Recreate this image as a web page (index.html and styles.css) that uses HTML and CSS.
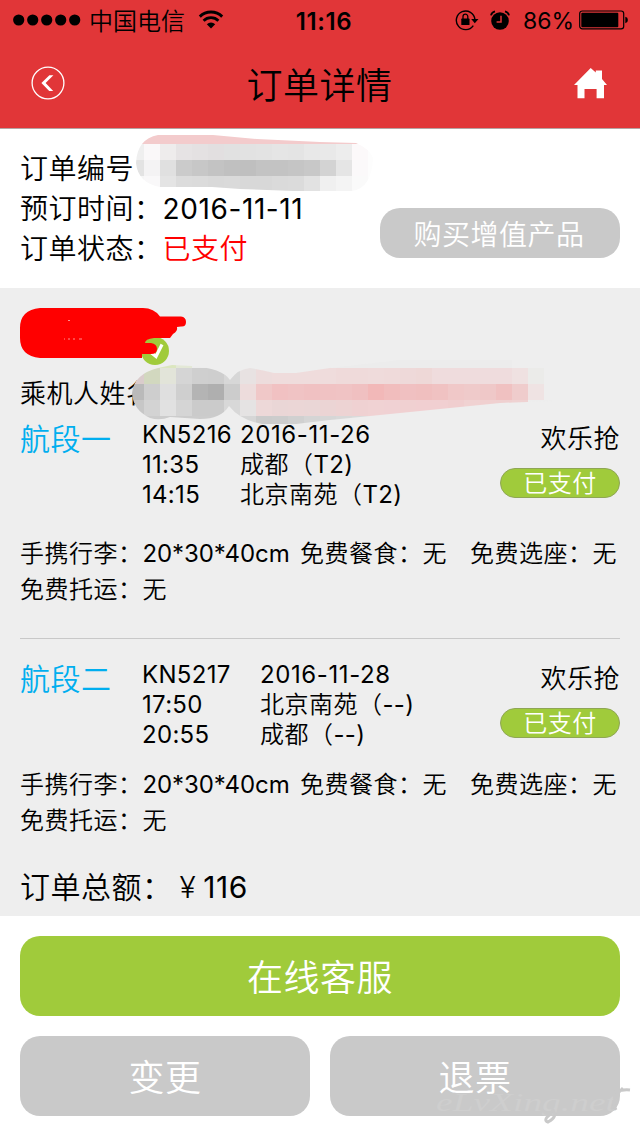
FILE: index.html
```html
<!DOCTYPE html>
<html lang="zh-CN">
<head>
  <meta charset="UTF-8">
  <meta name="viewport" content="width=device-width, initial-scale=1.0">
  <title>订单详情</title>
  <link rel="stylesheet" href="styles.css">
</head>
<body>
  <header>
    <div class="status-bar">
      <div class="status-left">
        <svg class="signal" width="68" height="12" viewBox="0 0 68 12">
          <circle cx="5.7" cy="6" r="5.6"/><circle cx="19.7" cy="6" r="5.6"/><circle cx="33.7" cy="6" r="5.6"/><circle cx="47.7" cy="6" r="5.6"/><circle cx="61.7" cy="6" r="5.6"/>
        </svg>
        <span class="carrier">中国电信</span>
        <svg class="wifi" width="26" height="20" viewBox="0 0 26 20">
          <path d="M1.8 6.6a16 16 0 0 1 22.4 0" fill="none" stroke="#000" stroke-width="2.9"/>
          <path d="M5.6 10.7a10.6 10.6 0 0 1 14.8 0" fill="none" stroke="#000" stroke-width="2.8"/>
          <path d="M8.8 14.2a6 6 0 0 1 8.4 0L13 18.6z"/>
        </svg>
      </div>
      <span class="clock">11:16</span>
      <div class="status-right">
        <svg class="lock" width="24" height="22" viewBox="0 0 24 22">
          <path d="M18.3 16.6a9.3 9.3 0 1 1 1.6-6.2" fill="none" stroke="#000" stroke-width="1.4"/>
          <path d="M16.2 10h7.3l-3.7 4.2z"/>
          <rect x="6.3" y="9.6" width="8.2" height="6.4" rx=".6"/>
          <path d="M8 10V7.6a2.4 2.4 0 0 1 4.8 0V10" fill="none" stroke="#000" stroke-width="1.3"/>
        </svg>
        <svg class="alarm" width="20" height="20" viewBox="0 0 20 20">
          <circle cx="10" cy="11" r="8.8"/>
          <path d="M1 5.4Q1.6 2.2 5 1.4M19 5.4Q18.4 2.2 15 1.4" fill="none" stroke="#000" stroke-width="1.8"/>
          <path d="M11 5.8V12H6.6" fill="none" stroke="#e13638" stroke-width="1.5"/>
        </svg>
        <span class="percent">86%</span>
        <svg class="battery" width="50" height="20" viewBox="0 0 50 20">
          <rect x=".7" y="1" width="44" height="17.8" rx="2.6" fill="none" stroke="#000" stroke-width="1.2"/>
          <rect x="2.3" y="2.8" width="37" height="14.4" rx="1"/>
          <path d="M46.3 6.7q2.6.6 2.6 3.3t-2.6 3.3z"/>
        </svg>
      </div>
    </div>
    <div class="nav">
      <svg width="34" height="34" viewBox="0 0 34 34">
        <circle cx="17" cy="17" r="15.9" fill="none" stroke="#fff" stroke-width="1.3"/>
        <path d="M22.4 9.3H18.4L10.4 17l7.8 8h4L14.6 17z" fill="#fff"/>
      </svg>
      <h1>订单详情</h1>
      <svg width="34" height="31" viewBox="0 0 34 31">
        <path d="M16.7 0L21.8 4.6V2.5H28V11L33 17H30V30.300H22.600V21H10.500V30.300H3.500V17H0z" fill="#fff"/>
      </svg>
    </div>
  </header>

  <section class="summary">
    <div class="summary-rows">
      <p>订单编号<svg class="mosaic" id="mosaicOrder" width="256" height="64" viewBox="128 128 256 64">
        <clipPath id="clipOrder"><path d="M136 163Q137 139 158 135H213L257 139 320 142 356 143Q370 149 373 158 372 188 352 191H320L293 191 240 189 212 187H160Q138 183 136 163z"/></clipPath>
      </svg></p>
      <p>预订时间：<span class="num date">2016-11-11</span></p>
      <p>订单状态：<span class="paid">已支付</span></p>
    </div>
    <button class="btn-extra">购买增值产品</button>
  </section>

  <section class="detail">
    <div class="passenger">
      <svg width="168" height="58" viewBox="20 307 168 58">
        <circle cx="155" cy="351" r="14" fill="#a0cb3b"/>
        <path d="M151 352.5l5 4 6-12" fill="none" stroke="#fff" stroke-width="3.2"/>
        <path d="M40 308H143Q154 308 160 316.500H181Q186 317 186 322T181 326.500L177 327Q178 331 173 334L170 338H154Q145 339 145 343H151Q157 344 157 349T151 354H142V358H40Q20 356 20 338V328Q20 310 40 308z" fill="#f00"/>
        <path d="M64 339h1m3 0h2m3 0h2m4 0h3M68 320.500h2" stroke="#ff9090" stroke-width="1"/>
      </svg>
    </div>
    <p class="name">乘机人姓名<svg class="mosaic" id="mosaicName" width="432" height="64" viewBox="128 360 432 64">
      <clipPath id="clipName"><path d="M132 393Q134 374 158 368L172 365 192 366Q222 368 230 380 238 369 250 368 263 370 274 373H296L330 368 400 360 512 354V368H544V400L553 401 500 403 430 410 400 413 330 420 296 424H262Q240 420 229 406 221 419 200 419L170 417Q160 421 150 418 133 410 132 393z"/></clipPath>
    </svg></p>

    <div class="flight">
      <h2>航段一</h2>
      <div class="times num">KN5216<br>11:35<br>14:15</div>
      <div class="places"><span class="num date">2016-11-26</span><br>成都（<span class="num">T2)</span><br>北京南苑（<span class="num">T2)</span></div>
      <div class="fare">欢乐抢<span class="tag">已支付</span></div>
    </div>
    <div class="services first">
      <span>手携行李：<span class="num size">20*30*40cm</span></span>
      <span>免费餐食：无</span>
      <span>免费选座：无</span>
      <span>免费托运：无</span>
    </div>

    <hr>

    <div class="flight second">
      <h2>航段二</h2>
      <div class="times num">KN5217<br>17:50<br>20:55</div>
      <div class="places"><span class="num date">2016-11-28</span><br>北京南苑（<span class="num">--)</span><br>成都（<span class="num">--)</span></div>
      <div class="fare">欢乐抢<span class="tag">已支付</span></div>
    </div>
    <div class="services">
      <span>手携行李：<span class="num size">20*30*40cm</span></span>
      <span>免费餐食：无</span>
      <span>免费选座：无</span>
      <span>免费托运：无</span>
    </div>

    <p class="total">订单总额：<span class="yen">¥</span><span class="num date">116</span></p>
  </section>

  <footer>
    <button class="btn-service">在线客服</button>
    <button>变更</button>
    <button>退票</button>
    <svg class="watermark" width="200" height="46" viewBox="0 0 200 46">
      <text x="2" y="29" textLength="180" lengthAdjust="spacingAndGlyphs">eLvXing.net</text>
      <path d="M189 6Q176 18 182 28M178 11Q188 7 196 8M118 27Q125 34 114 40 108 38 118 31" />
    </svg>
  </footer>

  <script>
    // one row of colours per 16px band, starting at x=128
    const orderRows = [
      [128, Array(16).fill('#f3cbcc')],
      [144, '#efefef #faf8f9 #eeecec #e6e3e4 #e4e1e2 #e2dfe0 #e1e1e1 #e2e2e2 #e3e3e3 #e5e5e5 #e4e4e4 #e8e8e8 #e9e9e9 #ededed #fcf9fa #fdfdfd'.split(' ')],
      [160, '#e3e3e3 #f4f3f4 #e0e0e0 #cbcbcb #c7c7c7 #c3c3c3 #c0c0c0 #bfbfbf #c3c3c3 #c3c3c3 #c5c5c5 #c8c8c8 #d3d3d3 #e5e5e5 #fbf9fa #fdfdfd'.split(' ')],
      [176, '#f6f6f6 #f9f8f9 #e4e4e4 #dcdcdc #dbdbdb #d9d9d9 #dadada #d8d8d8 #d8d8d8 #dadada #dbdbdb #e2e2e2 #f0f0f0 #f4f4f4 #fafafa #fdfdfd'.split(' ')]
    ];
    const nameRows = [
      [352, '#e0e0d8 #dbe3c8 #dbe6bf #e3e8d6 #ececec #ececec #ececec #ececec #ececec #ececec #ececec #ececec #ececec #ececec #ececec #ececec #ececec #ececec #ececec #ececec #ececec #ececec #ececec #ececec #ededed #ededed #ededed'.split(' ')],
      [368, '#dacccc #d2d8bf #e2e4d9 #d5d5d5 #cfcfcf #cecece #d7d7d7 #e8e2e2 #eddcdc #efdcdc #efdcdc #efdcdc #efdcdc #efdada #efdada #efdbdb #efdada #eed9d9 #eed8d7 #efdcdd #efdcdd #efdcdd #efdcdd #efdcdd #efe1e1 #ebebe9 #ededed'.split(' ')],
      [384, '#bababa #cecece #dfdfdf #cfcfcf #b4b4b4 #afafaf #cccccc #eddcdc #f0c8c8 #f1c1c2 #f0c3c4 #f0c1c2 #f0c2c3 #f0c3c4 #f0c0c1 #f2b8b8 #f1bdbd #f0c0c1 #f0bfbf #f0c2c2 #f0c8c8 #efcaca #efc8c8 #f0c1c1 #efcccc #efe3e3 #ededed'.split(' ')],
      [400, '#c7c7c7 #d3d3d3 #e1e1e1 #d5d5d5 #cbcbcb #cbcbcb #d8d8d8 #e5e3e3 #edd8d8 #ead6d6 #ebd6d6 #ead6d6 #ebd4d4 #edd3d3 #efd1d2 #f0d2d3 #f0d1d3 #f0d0d1 #f1cfd1 #f1cfd1 #f0cecf #f0d2d2 #f0d0d0 #efd0d0 #efd2d2 #ededed #ededed'.split(' ')],
      [416, '#cccccc #cccccc #cccccc #cccccc #cccccc #cccccc #d0d0d0 #d6d6d6 #cbcbcb #cccccc #d0d0d0 #d5d5d5 #d6d6d6 #d8d8d8 #dadada #e6d4d4 #edd3d3 #edd3d3 #edd3d3 #edd3d3 #edd3d3 #edd3d3 #ededed #ededed #ededed #ededed #ededed'.split(' ')]
    ];

    function drawMosaic(svg, clip, rows) {
      const g = document.createElementNS('http://www.w3.org/2000/svg', 'g');
      g.setAttribute('clip-path', `url(#${clip})`);
      rows.forEach(([y, colors]) => colors.forEach((color, i) => {
        const rect = document.createElementNS('http://www.w3.org/2000/svg', 'rect');
        rect.setAttribute('x', 128 + i * 16);
        rect.setAttribute('y', y);
        rect.setAttribute('width', 16);
        rect.setAttribute('height', 16);
        rect.setAttribute('fill', color);
        g.appendChild(rect);
      }));
      svg.appendChild(g);
    }

    drawMosaic(document.getElementById('mosaicOrder'), 'clipOrder', orderRows);
    drawMosaic(document.getElementById('mosaicName'), 'clipName', nameRows);
  </script>
</body>
</html>
```
FILE: styles.css
```css
* {
  box-sizing: border-box;
}

body {
  margin: 0;
  width: 640px;
  height: 1136px;
  overflow: hidden;
  font-family: Inter, 'Noto Sans CJK SC', sans-serif;
  font-weight: 350;
  font-size: 24px;
  letter-spacing: 0.5px;
  background: #fff;
  color: #000;
}

h1, h2, p {
  margin: 0;
  font-weight: 350;
}

svg {
  display: block;
  flex: none;
}

header {
  height: 129px;
  background: #e13638;
  border-bottom: 1px solid #b5a3a3;
}

.status-bar {
  display: grid;
  grid-template-columns: 1fr auto 1fr;
  align-items: center;
  height: 40px;
  padding: 0 11px 0 13px;
  letter-spacing: 0;
}
.status-left, .status-right {
  display: flex;
  align-items: center;
}
.status-right {
  justify-content: flex-end;
}
.carrier {
  height: 40px;
  margin: 0 13px 0 8px;
  line-height: 43px;
}
.clock {
  padding: 2px 0 0 6px;
  font-weight: 600;
  font-size: 24px;
  letter-spacing: 0.6px;
}
.alarm {
  margin: 0 13px 0 11px;
}
.percent {
  padding-top: 2px;
  margin-right: 5px;
  font-weight: 400;
  font-size: 23px;
}

.nav {
  display: flex;
  align-items: center;
  justify-content: space-between;
  height: 88px;
  padding: 0 32px 2px 31px;
}
.nav h1 {
  padding-top: 6px;
  font-size: 36px;
  line-height: 50px;
}

.summary {
  display: flex;
  justify-content: space-between;
  height: 159px;
  padding: 20px 20px 0;
}
.summary p {
  position: relative;
  height: 40px;
  font-size: 28px;
  line-height: 40px;
  white-space: nowrap;
}
.num {
  font-weight: 400;
  letter-spacing: 0.3px;
}
.date {
  letter-spacing: 0.6px;
}
.paid {
  color: #f00;
}
.mosaic {
  position: absolute;
  top: -21px;
  left: 108px;
}

button {
  height: 80px;
  padding: 0 0 2px;
  border: 0;
  border-radius: 20px;
  background: #c9c9c9;
  color: #fff;
  font: inherit;
  font-size: 36px;
  letter-spacing: 0.5px;
}
.btn-extra {
  width: 240px;
  height: 50px;
  margin-top: 59px;
  padding: 0 2px 0 0;
  font-size: 28px;
}

.detail {
  height: 628px;
  padding: 19px 20px 0;
  background: #eee;
}
.passenger {
  height: 66px;
}
.name {
  position: relative;
  height: 41px;
  font-size: 26px;
  line-height: 42px;
}
.name .mosaic {
  top: -13px;
}

.flight {
  display: flex;
  height: 122px;
  padding-top: 6px;
  line-height: 30px;
}
.flight h2 {
  width: 122px;
  font-size: 30px;
  line-height: 38px;
  color: #00aeef;
}
.times {
  width: 98px;
}
.second .times {
  width: 118px;
}
.places {
  flex: 1;
  white-space: nowrap;
}
.fare {
  display: flex;
  flex-direction: column;
  align-items: flex-end;
  font-size: 26px;
  line-height: 38px;
}
.tag {
  width: 120px;
  height: 30px;
  margin-top: 10px;
  border: 1px solid #8fa655;
  border-radius: 15px;
  background: #a0cb3b;
  color: #fff;
  font-size: 24px;
  line-height: 30px;
  text-align: center;
}

.services {
  display: grid;
  grid-template-columns: 280px 170px 150px;
  align-content: start;
  line-height: 36px;
  white-space: nowrap;
}
.services.first {
  height: 102px;
}
.size {
  letter-spacing: -0.1px;
}
hr {
  height: 1px;
  margin: 0 0 15px;
  border: 0;
  background: #c8c8c8;
}
.second {
  height: 113px;
}
.total {
  margin-top: 26px;
  font-size: 30px;
  line-height: 44px;
}
.yen {
  margin: 0 7px;
}

footer {
  position: relative;
  display: grid;
  grid-template-columns: 1fr 1fr;
  gap: 20px;
  padding: 20px;
}
.btn-service {
  grid-column: span 2;
  background: #a0cb3b;
}
.watermark {
  position: absolute;
  right: 6px;
  bottom: 8px;
  font: italic 26px 'Liberation Serif', serif;
  letter-spacing: 0;
  fill: #cecece;
}
.watermark path {
  fill: none;
  stroke: #c9c9c9;
  stroke-width: 3;
}
```
